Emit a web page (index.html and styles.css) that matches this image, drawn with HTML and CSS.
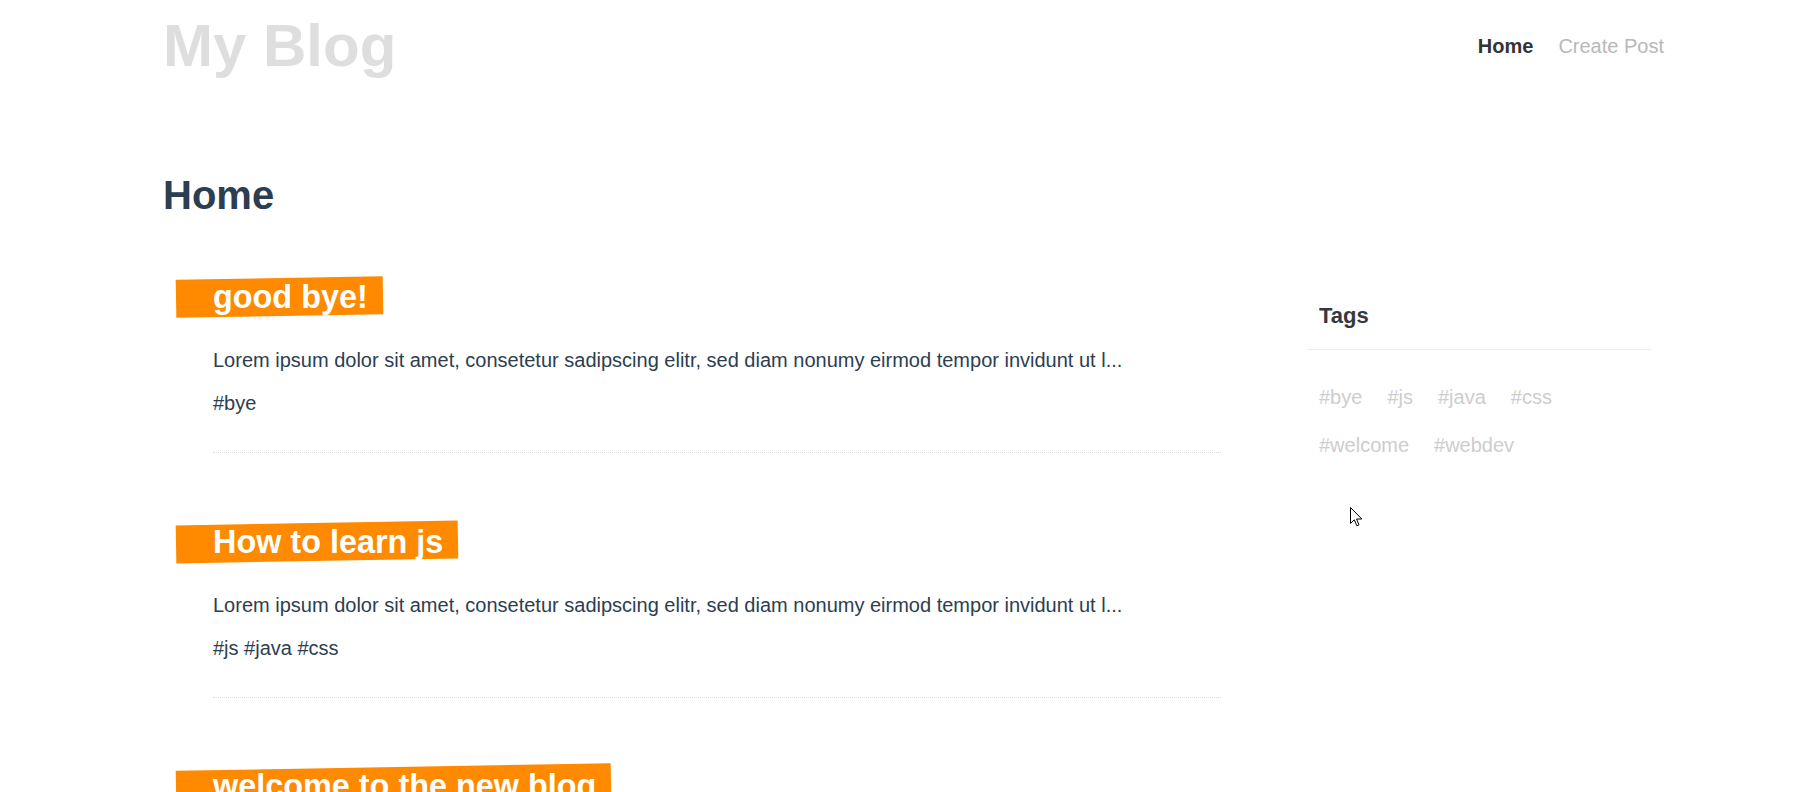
FILE: index.html
```html
<!DOCTYPE html>
<html lang="en">
<head>
<meta charset="utf-8">
<title>My Blog</title>
<link rel="stylesheet" href="styles.css">
</head>
<body>
<div class="page">
  <header class="site-header">
    <h1 class="logo">My Blog</h1>
    <nav class="nav">
      <a class="nav-link active" href="#">Home</a>
      <a class="nav-link" href="#">Create Post</a>
    </nav>
  </header>
  <main>
    <h1 class="page-title">Home</h1>
    <div class="layout">
      <section class="posts">
        <article class="post">
          <h2 class="post-title">good bye!</h2>
          <p class="post-excerpt">Lorem ipsum dolor sit amet, consetetur sadipscing elitr, sed diam nonumy eirmod tempor invidunt ut l...</p>
          <p class="post-tags">#bye</p>
        </article>
        <article class="post">
          <h2 class="post-title">How to learn js</h2>
          <p class="post-excerpt">Lorem ipsum dolor sit amet, consetetur sadipscing elitr, sed diam nonumy eirmod tempor invidunt ut l...</p>
          <p class="post-tags">#js #java #css</p>
        </article>
        <article class="post">
          <h2 class="post-title">welcome to the new blog</h2>
          <p class="post-excerpt">Lorem ipsum dolor sit amet, consetetur sadipscing elitr, sed diam nonumy eirmod tempor invidunt ut l...</p>
          <p class="post-tags">#welcome #webdev</p>
        </article>
      </section>
      <aside class="sidebar">
        <h3 class="sidebar-title">Tags</h3>
        <div class="tag-list">
          <a class="tag" href="#">#bye</a>
          <a class="tag" href="#">#js</a>
          <a class="tag" href="#">#java</a>
          <a class="tag" href="#">#css</a>
          <a class="tag" href="#">#welcome</a>
          <a class="tag" href="#">#webdev</a>
        </div>
      </aside>
    </div>
  </main>
</div>
<svg class="cursor" width="13" height="20" viewBox="0 0 13 20">
  <path d="M0.5 0.5 L0.5 16.5 L4.3 12.8 L6.8 18.8 L9 17.9 L6.6 12 L11.8 12 Z" fill="#fff" stroke="#000" stroke-width="1" stroke-linejoin="miter"/>
</svg>
</body>
</html>
```
FILE: styles.css
```css
html, body {
  margin: 0;
  padding: 0;
  background: #fff;
}

body {
  font-family: "Liberation Sans", Arial, sans-serif;
  color: #2c3e50;
  font-size: 20px;
  overflow: hidden;
}

.page {
  padding: 0 152px 0 163px;
}

.site-header {
  display: flex;
  justify-content: space-between;
  align-items: flex-start;
  padding-top: 11px;
}

.logo {
  margin: 0;
  font-size: 60px;
  font-weight: bold;
  color: #dedede;
  line-height: normal;
}

.nav {
  display: flex;
  gap: 25px;
  margin-top: 24px;
}

.nav-link {
  font-size: 20px;
  line-height: 23px;
  text-decoration: none;
  color: #b8b8b8;
}

.nav-link.active {
  color: #333;
  font-weight: bold;
}

.page-title {
  margin: 93px 0 0 0;
  font-size: 40px;
  font-weight: bold;
  color: #2c3e50;
  line-height: normal;
}

.layout {
  display: flex;
  align-items: flex-start;
  margin-top: 60px;
}

.posts {
  flex: 0 0 1058px;
}

.post {
  margin: 0 0 69.5px 50px;
  padding-bottom: 37px;
  border-bottom: 1px dotted #dcdcdc;
}

.post-title {
  position: relative;
  display: inline-block;
  margin: 0 0 0 -37px;
  padding: 0 15px 0 37px;
  font-size: 32.4px;
  line-height: 38px;
  font-weight: bold;
  color: #fff;
  z-index: 0;
}

.post-title::before {
  content: "";
  position: absolute;
  inset: 0;
  background: #ff8a00;
  transform: rotate(-1deg);
  z-index: -1;
}

.post-excerpt {
  margin: 33px 0 0 0;
  line-height: 23px;
}

.post-tags {
  margin: 20px 0 0 0;
  line-height: 23px;
}

.sidebar {
  flex: 0 0 344px;
  margin-left: 86px;
  margin-top: 25px;
}

.sidebar-title {
  margin: 0;
  padding: 0 12px 20px 12px;
  font-size: 22px;
  line-height: normal;
  font-weight: bold;
  color: #35393f;
  border-bottom: 1px solid #ececec;
}

.tag-list {
  display: flex;
  flex-wrap: wrap;
  column-gap: 25px;
  padding: 23px 12px 0 12px;
}

.tag {
  line-height: 48px;
  font-size: 20px;
  color: #cdcdcd;
  text-decoration: none;
}

.cursor {
  position: absolute;
  left: 1350px;
  top: 507px;
}
```
